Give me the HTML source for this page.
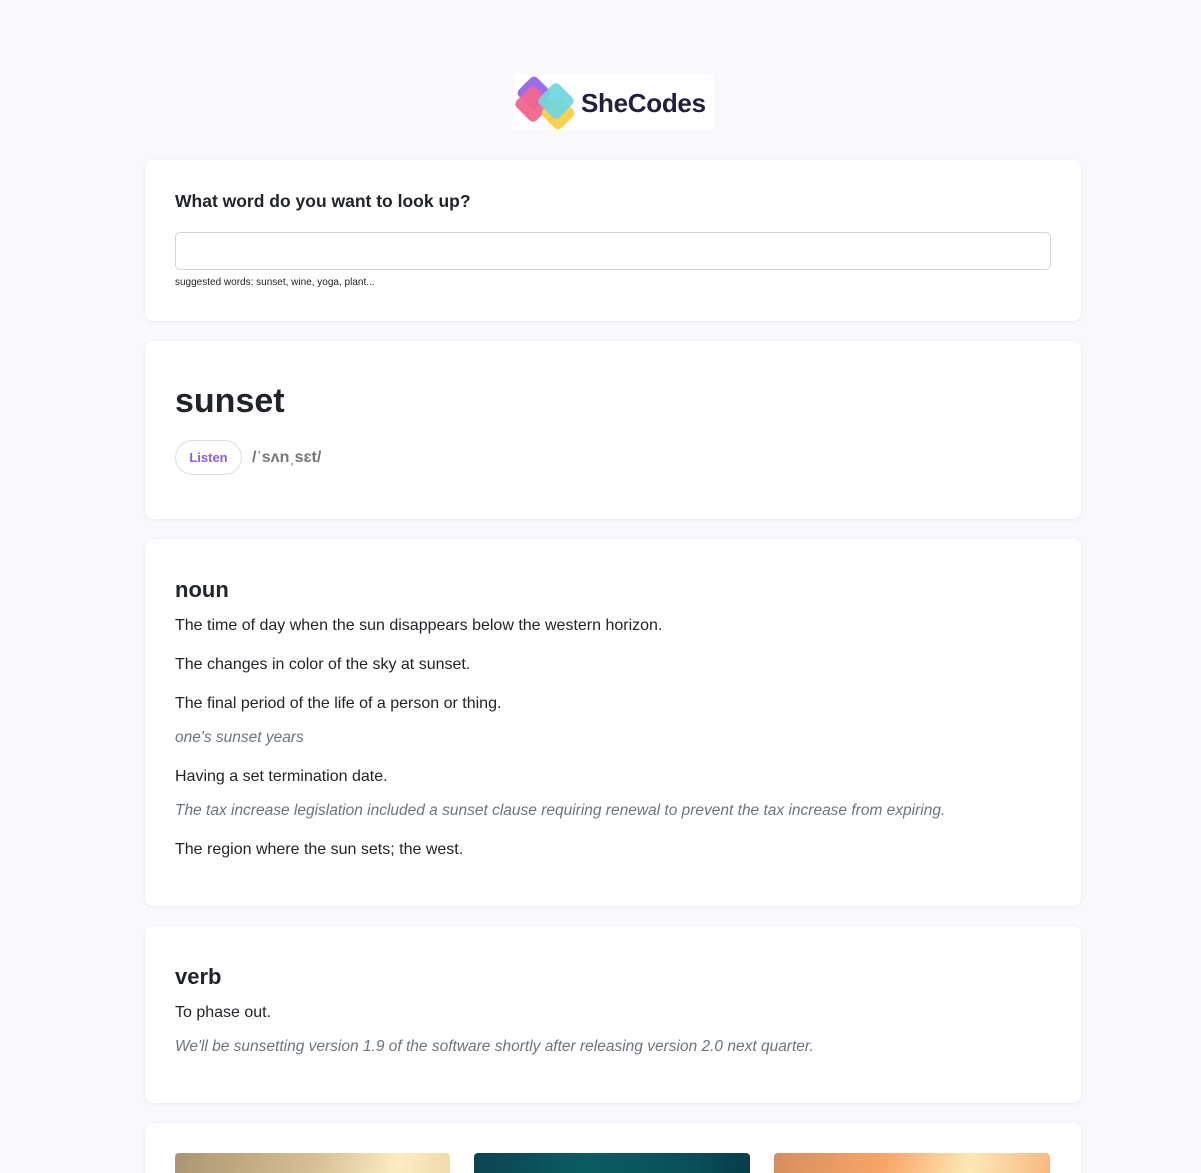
<!DOCTYPE html>
<html><head><meta charset="utf-8"><style>
*{box-sizing:border-box;margin:0;padding:0}
html,body{width:1201px;height:1173px;overflow:hidden}
body{background:#f8f8fd;font-family:"Liberation Sans",sans-serif;color:#212529;position:relative}
.card{position:absolute;left:145px;width:936px;background:#fff;border-radius:8px;box-shadow:0 1px 4px rgba(0,0,0,.06)}
.logo{position:absolute;left:513px;top:74px;width:201px;height:56px;background:#fff}
.def{position:absolute;left:30px;font-size:16px;color:#212529}
.ex{position:absolute;left:30px;font-size:15.5px;font-style:italic;color:#6c757d}
.pos{position:absolute;left:30px;font-size:22px;font-weight:bold}
</style></head><body>
<div class="logo">
<svg width="201" height="56" viewBox="0 0 201 56">
<rect x="8" y="6" width="26" height="26" rx="5" transform="rotate(45 21 19)" fill="#9a6cf0"/>
<rect x="6" y="16" width="28" height="28" rx="5" transform="rotate(45 20 30)" fill="#f2668f" opacity=".95"/>
<rect x="32" y="26" width="26" height="26" rx="5" transform="rotate(45 45 39)" fill="#fbd04d"/>
<rect x="29" y="13" width="28" height="28" rx="5" transform="rotate(45 43 27)" fill="#6dd7e0" opacity=".92"/>
<text x="68" y="38" font-family="Liberation Sans" font-weight="bold" font-size="26" fill="#22203e" letter-spacing="-0.3">SheCodes</text>
</svg></div>
<div class="card" style="top:160px;height:161px">
<div style="position:absolute;left:30px;top:31px;font-size:17.5px;font-weight:bold">What word do you want to look up?</div>
<div style="position:absolute;left:30px;top:72px;width:876px;height:38px;border:1px solid #ced4da;border-radius:5px"></div>
<div style="position:absolute;left:30px;top:117px;font-size:10px">suggested words: sunset, wine, yoga, plant...</div>
</div>
<div class="card" style="top:341px;height:178px">
<div style="position:absolute;left:30px;top:41px;font-size:34px;font-weight:bold">sunset</div>
<div style="position:absolute;left:30px;top:99px;width:67px;height:35px;border:1px solid #dcdce4;border-radius:18px;color:#8d5cf0;font-size:13px;font-weight:bold;text-align:center;line-height:33px">Listen</div>
<div style="position:absolute;left:107px;top:108px;font-size:16px;font-weight:bold;color:#777">/ˈsʌnˌsɛt/</div>
</div>
<div class="card" style="top:539px;height:367px">
<div class="pos" style="top:38px">noun</div>
<div class="def" style="top:78px">The time of day when the sun disappears below the western horizon.</div>
<div class="def" style="top:117px">The changes in color of the sky at sunset.</div>
<div class="def" style="top:156px">The final period of the life of a person or thing.</div>
<div class="ex" style="top:190px">one's sunset years</div>
<div class="def" style="top:229px">Having a set termination date.</div>
<div class="ex" style="top:263px">The tax increase legislation included a sunset clause requiring renewal to prevent the tax increase from expiring.</div>
<div class="def" style="top:302px">The region where the sun sets; the west.</div>
</div>
<div class="card" style="top:926px;height:177px">
<div class="pos" style="top:38px">verb</div>
<div class="def" style="top:78px">To phase out.</div>
<div class="ex" style="top:112px">We'll be sunsetting version 1.9 of the software shortly after releasing version 2.0 next quarter.</div>
</div>
<div class="card" style="top:1123px;height:100px">
<div style="position:absolute;left:30px;top:30px;width:275px;height:40px;border-radius:4px;background:linear-gradient(100deg,#a99670,#d6bf95 50%,#fbecc2 80%,#eed9a8)"></div>
<div style="position:absolute;left:329px;top:30px;width:276px;height:40px;border-radius:4px;background:linear-gradient(90deg,#0b4450,#0a5d62 40%,#0a4f58 80%,#063c4a)"></div>
<div style="position:absolute;left:629px;top:30px;width:276px;height:40px;border-radius:4px;background:linear-gradient(100deg,#d48e5d,#f8a668 40%,#fde8b5 70%,#f7b77e)"></div>
</div>
</body></html>
